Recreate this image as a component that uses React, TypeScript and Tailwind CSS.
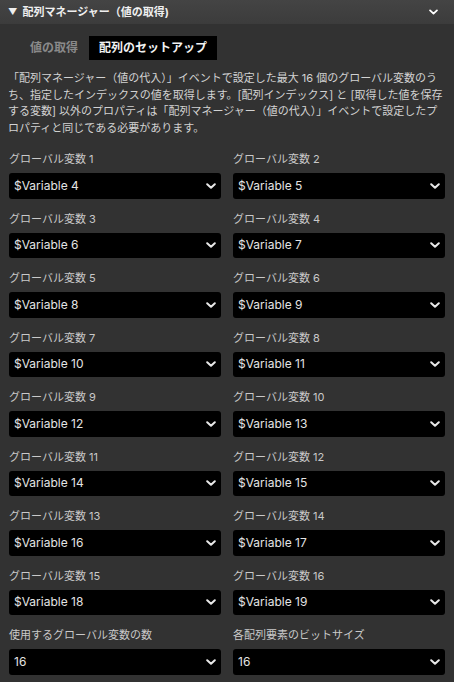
import { useState } from 'react';

const Chevron = ({ className }: { className?: string }) => (
  <svg viewBox="0 0 10 6" className={className} fill="none" stroke="currentColor" strokeWidth="2" strokeLinecap="round" strokeLinejoin="round">
    <path d="M1.2 1.2 5 4.8 8.8 1.2" />
  </svg>
);

const SelectBox = ({ label, value }: { label: string; value: string }) => (
  <div className="flex flex-col">
    <label className="h-4 text-[11px] leading-4 text-[#c9c9c9]">{label}</label>
    <div className="mt-[6px] flex h-[25.5px] items-center justify-between rounded-[3px] bg-black pr-[5px] pl-[5px]">
      <span className="text-[12px] text-[#e4e4e4]">{value}</span>
      <Chevron className="h-[6px] w-[10px] text-[#e8e8e8]" />
    </div>
  </div>
);

const App = () => {
  const [tab, setTab] = useState(1);

  const fields = [
    { label: 'グローバル変数 1', value: '$Variable 4' },
    { label: 'グローバル変数 2', value: '$Variable 5' },
    { label: 'グローバル変数 3', value: '$Variable 6' },
    { label: 'グローバル変数 4', value: '$Variable 7' },
    { label: 'グローバル変数 5', value: '$Variable 8' },
    { label: 'グローバル変数 6', value: '$Variable 9' },
    { label: 'グローバル変数 7', value: '$Variable 10' },
    { label: 'グローバル変数 8', value: '$Variable 11' },
    { label: 'グローバル変数 9', value: '$Variable 12' },
    { label: 'グローバル変数 10', value: '$Variable 13' },
    { label: 'グローバル変数 11', value: '$Variable 14' },
    { label: 'グローバル変数 12', value: '$Variable 15' },
    { label: 'グローバル変数 13', value: '$Variable 16' },
    { label: 'グローバル変数 14', value: '$Variable 17' },
    { label: 'グローバル変数 15', value: '$Variable 18' },
    { label: 'グローバル変数 16', value: '$Variable 19' },
    { label: '使用するグローバル変数の数', value: '16' },
    { label: '各配列要素のビットサイズ', value: '16' },
  ];

  return (
    <div
      className="min-h-[682px] w-full bg-[#323232]"
      style={{ fontFamily: 'Inter, "Noto Sans CJK JP", sans-serif' }}
    >
      {/* header */}
      <div className="flex h-6 items-center justify-between bg-gradient-to-b from-[#444444] to-[#3c3c3c] pr-4 pl-2">
        <div className="flex items-center gap-[5px] text-[11px] font-bold text-[#efefef]">
          <span className="text-[9px]">▼</span>
          <span>配列マネージャー（値の取得)</span>
        </div>
        <Chevron className="h-[6px] w-[9px] text-white" />
      </div>

      {/* tabs */}
      <div className="mt-[12px] flex gap-px pl-5">
        {['値の取得', '配列のセットアップ'].map((t, i) => (
          <button
            key={t}
            onClick={() => setTab(i)}
            className={
              tab === i
                ? 'h-6 bg-black px-[10px] text-[12px] font-bold text-[#f2f2f2]'
                : 'h-6 px-[10px] text-[12px] font-bold text-[#8a8a8a]'
            }
          >
            {t}
          </button>
        ))}
      </div>

      {/* description */}
      <p className="mt-[10px] px-2 text-[11px] leading-[16.5px] text-[#d2d2d2]">
        「配列マネージャー（値の代入）」イベントで設定した最大 16 個のグローバル変数のう
        <br />
        ち、指定したインデックスの値を取得します。[配列インデックス] と [取得した値を保存
        <br />
        する変数] 以外のプロパティは「配列マネージャー（値の代入）」イベントで設定したプ
        <br />
        ロパティと同じである必要があります。
      </p>

      {/* fields */}
      <div className="mt-[15px] grid grid-cols-2 gap-x-3 gap-y-3 px-[9px] pb-2">
        {fields.map((f) => (
          <SelectBox key={f.label} label={f.label} value={f.value} />
        ))}
      </div>
    </div>
  );
};

export default App;
